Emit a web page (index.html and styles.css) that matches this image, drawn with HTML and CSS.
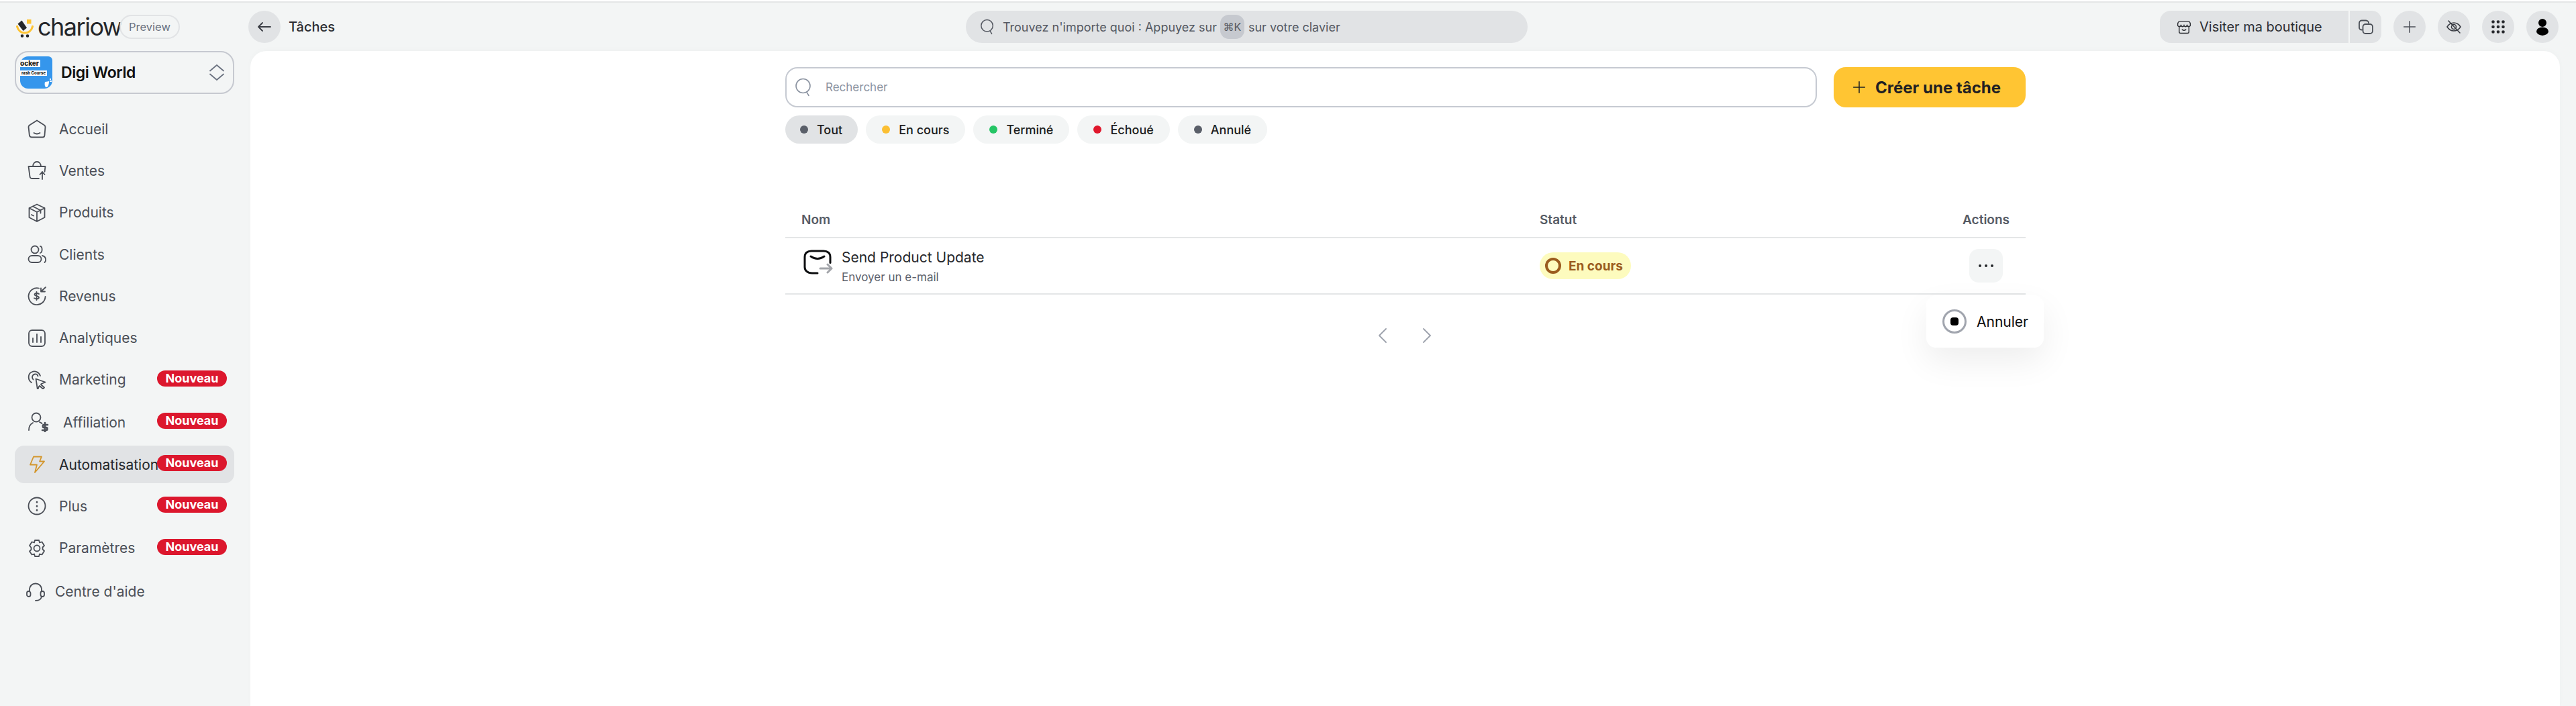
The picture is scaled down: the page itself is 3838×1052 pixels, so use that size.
FILE: index.html
```html
<!DOCTYPE html>
<html lang="fr">
<head>
<meta charset="utf-8">
<title>Tâches</title>
<link rel="stylesheet" href="styles.css">
</head>
<body>
<svg class="sprite" width="0" height="0" aria-hidden="true">
  <symbol id="i-search" viewBox="0 0 24 28"><circle cx="11.5" cy="12" r="10.500" /><path d="M17 21.500l3 5"/></symbol>
  <symbol id="i-plus" viewBox="0 0 24 24"><path d="M12 2v20M2 12h20"/></symbol>
</svg>
<div class="topline"></div>
<div class="app">
  <aside class="sidebar">
    <div class="brand">
      <svg class="logo" viewBox="0 0 26 28">
        <path d="M1.500 11.500C3 18 8 21 13 21s10-3 11.500-9.500" stroke="#fec331" stroke-width="3.200"/>
        <path d="M2.500 7.500L8.500 2.500 16 13.500 10.500 18z" fill="#24262a"/>
        <rect x="16" y="1" width="6.500" height="6.500" fill="#fec331"/>
        <circle cx="9" cy="25.500" r="2.300" fill="#24262a"/><circle cx="17" cy="25.500" r="2.300" fill="#24262a"/>
      </svg>
      <span class="wordmark">chariow</span>
      <span class="preview">Preview</span>
    </div>
    <div class="store">
      <div class="thumb"><span class="t1">ocker</span><span class="t2">rash Course</span>
        <svg class="whale" viewBox="0 0 12 16"><path d="M1 7c3 0 5-1 6-1 0 4-1 9-4 9-2 0-3-4-2-8z" fill="#fff"/><path d="M8 2h2v2H8zM8 5h3v2H8z" fill="#fff"/></svg></div>
      <span class="store-name">Digi World</span>
      <svg class="updown" viewBox="0 0 22 24"><path d="M1 9.500L11 1l10 8.500M1 14.500L11 23l10-8.500"/></svg>
    </div>
    <nav class="nav">
      <a class="nav-row">
        <svg class="ic" viewBox="0 0 28 28"><path d="M14 1.500L25 8.500c1 .7 1.500 1.500 1.500 2.700l-1 12c0 2-1.300 3.300-3 3.300H6c-2 0-3-1.300-3.200-3.300l-1.300-12c0-1.200.5-2 1.500-2.700z"/><path d="M9.500 20c3 2 6 2 9 0"/></svg>
        <span>Accueil</span></a>
      <a class="nav-row">
        <svg class="ic" viewBox="0 0 28 28"><path d="M8 8c0-4 2.500-7 6-7s6 3 6 7M1.500 8h25l-1 8M1.500 8l2 15c.2 1.500 1 3 3 3H17"/><path d="M22 27V16M18.500 20l3.500-4 3.500 4"/></svg>
        <span>Ventes</span></a>
      <a class="nav-row">
        <svg class="ic" viewBox="0 0 28 28"><path d="M14 1.500l11.500 5.500v14L14 27 2.500 21V7zM2.500 7L14 13l11.500-6M14 13v14M8 4.500l11.500 6v4"/><path d="M6 17l3 1.500"/></svg>
        <span>Produits</span></a>
      <a class="nav-row">
        <svg class="ic" viewBox="0 0 28 28"><circle cx="11" cy="7" r="5.500"/><path d="M19 2c3.500.5 3.500 9 0 10"/><rect x="1.500" y="16" width="19" height="10" rx="5"/><path d="M22 16c6 1 6 8 3.500 10"/></svg>
        <span>Clients</span></a>
      <a class="nav-row">
        <svg class="ic" viewBox="0 0 28 28"><path d="M17 2.500A12.500 12.500 0 1 0 26.500 15"/><path d="M27 1l-7 6.500M20 2.500v5h6"/><path d="M13.500 8v12M17 11c-1-1-6-2-6.500 .8 0 3 6.500 1.500 6.500 4.500 0 2.700-5 2.200-7 1"/></svg>
        <span>Revenus</span></a>
      <a class="nav-row">
        <svg class="ic" viewBox="0 0 28 28"><rect x="2" y="2" width="24" height="24" rx="5"/><path d="M8 14v6M14 8v12M20 12v8"/></svg>
        <span>Analytiques</span></a>
      <a class="nav-row">
        <svg class="ic" viewBox="0 0 28 28"><path d="M12.500 12.500l14 5-6 2.500-.5 1 5 4.500-2 2-5-4.500-1 1-2 5z"/><path d="M6 18C0 14 .5 5 6 2.500 11 0 17 2 19 8"/><path d="M8.500 13.500C5.500 10 7.500 6 11 5.500c2.500-.3 4 1 4.500 3"/></svg>
        <span>Marketing</span><span class="badge">Nouveau</span></a>
      <a class="nav-row affil">
        <svg class="ic ic-wide" viewBox="0 0 32 30"><circle cx="13" cy="8" r="6.500"/><path d="M2 27c0-7 4-10 6-11M18 15c2.500 1 3.500 2 3.500 2"/><path class="thick" d="M30 19h-6c-1.500 0-1.500 4 0 4h4c2 0 2 4 0 4h-6M26 16v14"/></svg>
        <span>Affiliation</span><span class="badge">Nouveau</span></a>
      <a class="nav-row active">
        <svg class="ic" viewBox="0 0 28 28"><path d="M9 2.500h12l-3 7h7L11 26l3-11.500H4z" stroke="#d3962c"/></svg>
        <span>Automatisation</span><span class="badge">Nouveau</span></a>
      <a class="nav-row">
        <svg class="ic" viewBox="0 0 28 28"><circle cx="14" cy="14" r="12.500"/><path class="dots" d="M14 8v.5M14 14v.5M14 20v.5"/></svg>
        <span>Plus</span><span class="badge">Nouveau</span></a>
      <a class="nav-row">
        <svg class="ic" viewBox="0 0 28 28"><circle cx="14" cy="14" r="4.500"/><path d="M11 2h6l1 3.500 3.500-1 3.500 5.500-2.500 2.500v3l2.500 2.500-3.500 5.500-3.500-1-1 3.500h-6l-1-3.500-3.500 1L3 18.500 5.500 16v-3L3 10l3.500-5.500 3.500 1z"/></svg>
        <span>Paramètres</span><span class="badge">Nouveau</span></a>
      <a class="nav-row help">
        <svg class="ic" viewBox="0 0 28 28"><path d="M5 13V11C5 5 9 1.500 14 1.500S23 5 23 11v2M14 27c5 0 8-1 9-6"/><rect x="1" y="13" width="5.500" height="8" rx="2.700"/><rect x="21.500" y="13" width="5.500" height="8" rx="2.700"/></svg>
        <span>Centre d'aide</span></a>
    </nav>
  </aside>
  <div class="content">
    <header class="topbar">
      <div class="title-group">
        <button class="circle back"><svg class="ic-sm" viewBox="0 0 20 14"><path d="M19 7H1M7 1L1 7l6 6"/></svg></button>
        <span class="page-title">Tâches</span>
      </div>
      <div class="omni">
        <svg class="ic-omni"><use href="#i-search"/></svg>
        <span>Trouvez n'importe quoi : Appuyez sur</span><kbd>⌘K</kbd><span>sur votre clavier</span>
      </div>
      <div class="top-actions">
        <div class="visit-group">
          <button class="visit">
            <svg class="ic-store" viewBox="0 0 22 22"><path d="M3 10v8.500C3 20 4 21 5.500 21h11c1.500 0 2.500-1 2.500-2.500V10"/><path d="M4 1.500h14c1.500 0 2.500 1 3 2.500l.5 3.500c-.5 3-5 3.500-5.500 0-.5 3.500-5.500 3.500-5 0 .5 3.500-4.500 3.500-5 0-.5 3.500-5 3-5.500 0L1 4c.5-1.500 1.500-2.500 3-2.500z"/><path d="M8 15c2 1.800 4 1.800 6 0"/></svg>
            Visiter ma boutique</button>
          <button class="copy"><svg class="ic-copy" viewBox="0 0 22 22"><path d="M5 15.500C2.500 15.500 1 14 1 12V5.500C1 3 2.500 1.500 5 1.500h5.500C13 1.500 15 3 15 5"/><rect x="6.500" y="7" width="14.500" height="14" rx="4"/></svg></button>
        </div>
        <button class="circle"><svg class="ic-sm2"><use href="#i-plus"/></svg></button>
        <button class="circle"><svg class="ic-eye" viewBox="0 0 22 20"><path d="M1 10c2.500-4 5.700-6 10-6s7.500 2 10 6c-2.500 4-5.700 6-10 6s-7.500-2-10-6z"/><circle cx="11" cy="10" r="3.500"/><path d="M3 1l17 18"/></svg></button>
        <button class="circle"><svg class="ic-grid" viewBox="0 0 20 20"><g fill="#26282c"><circle cx="2.500" cy="2.500" r="2.300"/><circle cx="10" cy="2.500" r="2.300"/><circle cx="17.500" cy="2.500" r="2.300"/><circle cx="2.500" cy="10" r="2.300"/><circle cx="10" cy="10" r="2.300"/><circle cx="17.500" cy="10" r="2.300"/><circle cx="2.500" cy="17.500" r="2.300"/><circle cx="10" cy="17.500" r="2.300"/><circle cx="17.500" cy="17.500" r="2.300"/></g></svg></button>
        <button class="circle"><svg class="ic-user" viewBox="0 0 18 25"><circle cx="9" cy="6" r="6"/><ellipse cx="9" cy="18.700" rx="9" ry="6.200"/></svg></button>
      </div>
    </header>
    <main class="panel">
      <div class="inner">
        <div class="search-row">
          <label class="search"><svg class="ic-search"><use href="#i-search"/></svg><span>Rechercher</span></label>
          <button class="create"><svg class="ic-create"><use href="#i-plus"/></svg>Créer une tâche</button>
        </div>
        <div class="pills">
          <span class="pill on"><i class="dot gray"></i>Tout</span>
          <span class="pill"><i class="dot yellow"></i>En cours</span>
          <span class="pill"><i class="dot green"></i>Terminé</span>
          <span class="pill"><i class="dot red"></i>Échoué</span>
          <span class="pill"><i class="dot gray"></i>Annulé</span>
        </div>
        <div class="thead">
          <span class="col-name">Nom</span><span class="col-status">Statut</span><span class="col-actions">Actions</span>
        </div>
        <div class="trow">
          <div class="col-name task">
            <svg class="ic-mail" viewBox="0 0 44 38"><path d="M21 35H13C6 35 2 31 2 26V11C2 5 6 2 12 2H30C36 2 40 5 40 11V19.500"/><path d="M11 10q10 7 20 0"/><path class="arrow" d="M25 28h16M36 22l6 6-6 6"/></svg>
            <div class="task-text"><div class="task-name">Send Product Update</div><div class="task-sub">Envoyer un e-mail</div></div>
          </div>
          <div class="col-status"><span class="state"><i class="ring"></i>En cours</span></div>
          <div class="col-actions"><button class="more"><i></i><i></i><i></i></button></div>
          <div class="menu"><svg class="ic-stop" viewBox="0 0 36 36"><circle cx="18" cy="18" r="16.500"/><rect x="12" y="12" width="12" height="12" rx="4"/></svg>Annuler</div>
        </div>
        <div class="pager">
          <svg class="chev" viewBox="0 0 12 22"><path d="M11 1L1 11l10 10"/></svg>
          <svg class="chev" viewBox="0 0 12 22"><path d="M1 1l10 10L1 21"/></svg>
        </div>
      </div>
    </main>
  </div>
</div>
</body>
</html>
```
FILE: styles.css
```css
* { box-sizing: border-box; }
html, body { margin: 0; height: 100%; }
body { background: #f3f5f5; font-family: "Inter", "Liberation Sans", sans-serif; color: #24262a; overflow: hidden; }
.sprite { position: absolute; }
svg { fill: none; stroke-linecap: round; stroke-linejoin: round; display: block; flex: none; }
button { border: 0; font: inherit; color: inherit; padding: 0; background: none; }
.topline { height: 4px; background: linear-gradient(#fff 0 2px, #e4e6e7 2px); }
.app { display: flex; height: 1048px; }

.sidebar { width: 373px; flex: none; padding: 12px 24px 0 22px; }
.brand { display: flex; align-items: center; height: 48px; margin-bottom: 12px; padding-left: 2px; }
.logo { width: 26px; height: 28px; margin-right: 6px; margin-top: 3px; }
.wordmark { font-size: 36px; letter-spacing: -1.500px; color: #24262a; line-height: 1; width: 122px; flex: none; }
.preview { height: 36px; width: 90px; border: 2px solid #e1e3e5; border-radius: 18px; color: #6b7280; font-size: 16.500px; display: flex; align-items: center; justify-content: center; }
.store { height: 64px; border: 2px solid #c6c9d0; border-radius: 20px; display: flex; align-items: center; padding-left: 6px; }
.thumb { width: 48px; height: 48px; background: #3596ec; border-radius: 12px 6px 12px 12px; position: relative; overflow: hidden; }
.t1 { position: absolute; left: 0; top: 5px; background: #fff; color: #222; font-size: 10px; font-weight: 800; height: 11px; line-height: 11px; width: 30px; text-align: right; padding-right: 3px; }
.t2 { position: absolute; left: 0; top: 21px; background: #fff; color: #222; font-size: 6px; font-weight: 800; height: 8px; line-height: 8px; width: 40px; text-align: right; padding-right: 2px; white-space: nowrap; overflow: hidden; }
.whale { position: absolute; right: 0; bottom: 0; width: 12px; height: 18px; }
.store-name { font-size: 23px; font-weight: 600; color: #111; margin-left: 13px; flex: 1; letter-spacing: -.4px; }
.updown { width: 22px; height: 24px; margin-right: 13px; stroke: #6b7280; stroke-width: 1.800; }

.nav { padding-top: 21px; display: flex; flex-direction: column; }
.nav-row { height: 62.300px; display: flex; align-items: center; padding: 0 11px 0 19px; font-size: 21px; color: #4b4f57; position: relative; }
.nav-row > span:first-of-type { margin-left: 19px; white-space: nowrap; }
.ic { width: 28px; height: 28px; stroke: #4b4f57; stroke-width: 1.800; }
.ic-wide { width: 32px; height: 30px; margin-right: -1px; }
.thick { stroke-width: 2.600; }
.dots { stroke-width: 2.600; }
.affil { height: 64px; }
.affil > span:first-of-type { margin-left: 22px; }
.active { background: #e1e3e5; border-radius: 14px; height: 56px; margin: 3px 0; color: #24262a; }
.help { margin-top: 3px; padding-left: 17px; }
.help > span:first-of-type { margin-left: 15px; }
.badge { position: absolute; right: 11px; top: 50%; margin-top: -14px; width: 104px; height: 24px; border-radius: 12px; background: #dc172d; color: #fff; font-size: 18px; font-weight: 700; line-height: 24px; text-align: center; }

.content { flex: 1; min-width: 0; display: flex; flex-direction: column; padding-right: 24px; }
.topbar { height: 72px; display: flex; align-items: center; position: relative; }
.title-group { display: flex; align-items: center; gap: 12px; margin-left: -3px; }
.circle { width: 48px; height: 48px; border-radius: 50%; background: #e1e3e5; display: flex; align-items: center; justify-content: center; flex: none; }
.ic-sm { width: 20px; height: 14px; stroke: #3a3d44; stroke-width: 1.800; }
.page-title { font-size: 20px; font-weight: 500; color: #2b2d32; }
.omni { position: absolute; left: 1066px; top: 12px; width: 837px; height: 48px; background: #e1e3e5; border-radius: 24px; display: flex; align-items: center; padding-left: 22px; font-size: 18px; color: #555962; white-space: nowrap; }
.ic-omni { width: 20px; height: 24px; stroke: #555962; stroke-width: 1.800; margin-right: 13px; }
kbd { font: inherit; font-size: 16px; background: #c6c9cf; border-radius: 13px; height: 36px; width: 36px; margin: 0 6px 0 5px; display: flex; align-items: center; justify-content: center; }
.top-actions { margin-left: auto; display: flex; gap: 18px; align-items: center; margin-right: 2px; }
.visit-group { display: flex; gap: 2px; }
.visit { height: 48px; width: 281px; background: #e1e3e5; border-radius: 16px 0 0 16px; display: flex; align-items: center; padding-left: 26px; gap: 13px; font-size: 20px; color: #2b2d32; }
.copy { height: 48px; width: 47px; background: #e1e3e5; border-radius: 0 14px 14px 0; display: flex; align-items: center; justify-content: center; }
.ic-store { width: 20px; height: 21px; stroke: #2b2d32; stroke-width: 1.600; }
.ic-copy { width: 22px; height: 22px; stroke: #4b4f57; stroke-width: 1.800; }
.ic-sm2 { width: 20px; height: 20px; stroke: #4b4f57; stroke-width: 1.800; }
.ic-eye { width: 22px; height: 20px; stroke: #3a3d44; stroke-width: 1.600; }
.ic-grid { width: 20px; height: 20px; }
.ic-user { width: 18px; height: 25px; fill: #000; }

.panel { flex: 1; background: #fff; border-radius: 24px 24px 0 0; box-shadow: 0 -2px 8px rgba(0,0,0,.02); min-height: 0; }
.inner { width: 1848px; margin-left: 797px; padding-top: 24px; }
.search-row { display: flex; gap: 25px; height: 60px; }
.search { flex: 1; border: 2px solid #c6cad2; border-radius: 18px; display: flex; align-items: center; padding-left: 13px; color: #8b93a1; font-size: 17px; }
.ic-search { width: 24px; height: 28px; stroke: #8b93a1; stroke-width: 1.600; margin-right: 21px; }
.create { width: 286px; background: #ffc533; border-radius: 18px; display: flex; align-items: center; padding-left: 28px; gap: 14px; font-size: 24px; font-weight: 700; color: #1f2023; }
.ic-create { width: 20px; height: 20px; stroke: #1f2023; stroke-width: 1.800; }
.pills { display: flex; gap: 12px; margin-top: 12px; }
.pill { height: 42px; border-radius: 21px; background: #f3f5f5; display: flex; align-items: center; padding: 0 24px; gap: 13px; font-size: 18px; font-weight: 500; color: #1c1d20; white-space: nowrap; }
.pill.on { background: #e1e3e5; padding: 0 23px 0 22px; }
.dot { width: 12px; height: 12px; border-radius: 50%; }
.gray { background: #5a5f69; }
.yellow { background: #fbbf33; }
.green { background: #25c565; }
.red { background: #e0172c; }
.thead, .trow { display: grid; grid-template-columns: 1100px 1fr auto; align-items: center; position: relative; }
.thead { height: 54px; margin-top: 87px; padding: 0 24px; color: #565b65; font-size: 19px; font-weight: 600; border-bottom: 2px solid #e4e6e7; }
.col-actions { justify-self: end; }
.trow { height: 84px; border-bottom: 2px solid #e4e6e7; padding: 0 34px 0 24px; }
.task { display: flex; align-items: center; gap: 13px; margin-left: 3px; }
.task-text { margin-top: 3px; }
.ic-mail { width: 44px; height: 38px; stroke: #0e0f11; stroke-width: 3; margin-top: -10px; }
.arrow { stroke: #a3a5aa; }
.task-name { font-size: 21px; color: #25272b; line-height: 30px; }
.task-sub { font-size: 17px; color: #5d626c; line-height: 28px; }
.state { height: 40px; width: 136px; border-radius: 20px; background: #fdfbbe; color: #9b5c1e; display: inline-flex; align-items: center; padding-left: 8px; gap: 11px; font-size: 19px; font-weight: 700; vertical-align: middle; }
.ring { width: 24px; height: 24px; border: 4px solid #9b5c1e; border-radius: 50%; }
.more { width: 50px; height: 50px; border-radius: 14px; background: #f3f5f5; display: flex; align-items: center; justify-content: center; gap: 5px; }
.more i { width: 4px; height: 4px; border-radius: 50%; background: #25272b; }
.menu { position: absolute; left: 1700px; top: 85px; width: 175px; height: 78px; padding-left: 24px; background: #fff; border-radius: 14px; box-shadow: 0 20px 50px rgba(0,0,0,.07); display: flex; align-items: center; gap: 15px; font-size: 21px; color: #0d0d0f; }
.ic-stop { width: 36px; height: 36px; stroke: #a1a5ae; stroke-width: 3; }
.ic-stop rect { fill: #000; stroke: none; }
.pager { display: flex; justify-content: center; gap: 54px; padding: 50px 0 0 0; margin-left: -2px; }
.chev { width: 12px; height: 22px; stroke: #9da2ac; stroke-width: 1.800; }
```
